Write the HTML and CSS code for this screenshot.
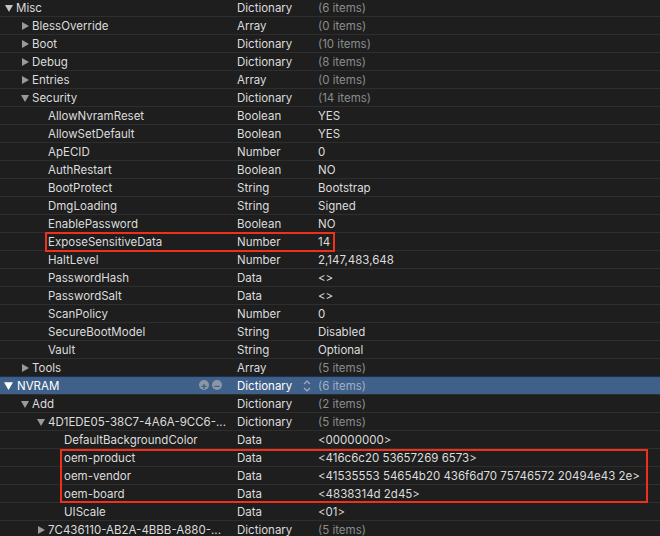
FILE: index.html
```html
<!DOCTYPE html>
<html>
<head>
<meta charset="utf-8">
<link rel="stylesheet" href="styles.css">
</head>
<body>
<svg width="0" height="0" class="defs">
  <defs>
    <symbol id="down" viewBox="0 0 8 8"><path d="M0 1 H8 L4 8 Z"/></symbol>
    <symbol id="right" viewBox="0 0 8 8"><path d="M1 0 V8 L8 4 Z"/></symbol>
  </defs>
</svg>
<div class="list">
  <div class="row top"><div class="key l0"><svg class="tri open"><use href="#down"/></svg>Misc</div><div class="type">Dictionary</div><div class="val dim">(6 items)</div></div>
  <div class="row"><div class="key l1"><svg class="tri"><use href="#right"/></svg>BlessOverride</div><div class="type">Array</div><div class="val dim">(0 items)</div></div>
  <div class="row"><div class="key l1"><svg class="tri"><use href="#right"/></svg>Boot</div><div class="type">Dictionary</div><div class="val dim">(10 items)</div></div>
  <div class="row"><div class="key l1"><svg class="tri"><use href="#right"/></svg>Debug</div><div class="type">Dictionary</div><div class="val dim">(8 items)</div></div>
  <div class="row"><div class="key l1"><svg class="tri"><use href="#right"/></svg>Entries</div><div class="type">Array</div><div class="val dim">(0 items)</div></div>
  <div class="row"><div class="key l1"><svg class="tri"><use href="#down"/></svg>Security</div><div class="type">Dictionary</div><div class="val dim">(14 items)</div></div>
  <div class="row"><div class="key l2">AllowNvramReset</div><div class="type">Boolean</div><div class="val">YES</div></div>
  <div class="row"><div class="key l2">AllowSetDefault</div><div class="type">Boolean</div><div class="val">YES</div></div>
  <div class="row"><div class="key l2">ApECID</div><div class="type">Number</div><div class="val">0</div></div>
  <div class="row"><div class="key l2">AuthRestart</div><div class="type">Boolean</div><div class="val">NO</div></div>
  <div class="row"><div class="key l2">BootProtect</div><div class="type">String</div><div class="val">Bootstrap</div></div>
  <div class="row"><div class="key l2">DmgLoading</div><div class="type">String</div><div class="val">Signed</div></div>
  <div class="row"><div class="key l2">EnablePassword</div><div class="type">Boolean</div><div class="val">NO</div></div>
  <div class="group">
    <div class="row"><div class="key l2">ExposeSensitiveData</div><div class="type">Number</div><div class="val">14</div></div>
    <div class="mark mark-a"></div>
  </div>
  <div class="row"><div class="key l2">HaltLevel</div><div class="type">Number</div><div class="val">2,147,483,648</div></div>
  <div class="row"><div class="key l2">PasswordHash</div><div class="type">Data</div><div class="val">&lt;&gt;</div></div>
  <div class="row"><div class="key l2">PasswordSalt</div><div class="type">Data</div><div class="val">&lt;&gt;</div></div>
  <div class="row"><div class="key l2">ScanPolicy</div><div class="type">Number</div><div class="val">0</div></div>
  <div class="row"><div class="key l2">SecureBootModel</div><div class="type">String</div><div class="val">Disabled</div></div>
  <div class="row"><div class="key l2">Vault</div><div class="type">String</div><div class="val">Optional</div></div>
  <div class="row"><div class="key l1"><svg class="tri"><use href="#right"/></svg>Tools</div><div class="type">Array</div><div class="val dim">(5 items)</div></div>
  <div class="row selected"><div class="key l0"><svg class="tri sel"><use href="#down"/></svg>NVRAM<span class="btns"><span class="circ">+</span><span class="circ">&minus;</span></span></div><div class="type">Dictionary<svg class="updown" viewBox="0 0 8 14"><path d="M1 5 L4 2 L7 5 M1 9 L4 12 L7 9"/></svg></div><div class="val dim">(6 items)</div></div>
  <div class="row"><div class="key l1"><svg class="tri"><use href="#down"/></svg>Add</div><div class="type">Dictionary</div><div class="val dim">(2 items)</div></div>
  <div class="row"><div class="key l2"><svg class="tri"><use href="#down"/></svg>4D1EDE05-38C7-4A6A-9CC6-...</div><div class="type">Dictionary</div><div class="val dim">(5 items)</div></div>
  <div class="row"><div class="key l3">DefaultBackgroundColor</div><div class="type">Data</div><div class="val">&lt;00000000&gt;</div></div>
  <div class="group">
    <div class="row"><div class="key l3">oem-product</div><div class="type">Data</div><div class="val">&lt;416c6c20 53657269 6573&gt;</div></div>
    <div class="row"><div class="key l3">oem-vendor</div><div class="type">Data</div><div class="val">&lt;41535553 54654b20 436f6d70 75746572 20494e43 2e&gt;</div></div>
    <div class="row"><div class="key l3">oem-board</div><div class="type">Data</div><div class="val">&lt;4838314d 2d45&gt;</div></div>
    <div class="mark mark-b"></div>
  </div>
  <div class="row"><div class="key l3">UIScale</div><div class="type">Data</div><div class="val">&lt;01&gt;</div></div>
  <div class="row"><div class="key l2"><svg class="tri"><use href="#right"/></svg>7C436110-AB2A-4BBB-A880-...</div><div class="type">Dictionary</div><div class="val dim">(5 items)</div></div>
</div>
</body>
</html>
```

FILE: styles.css
```css
html, body {
  margin: 0;
  padding: 0;
  background: #1e1e1e;
  overflow: hidden;
}
.defs { position: absolute; }
.list {
  margin-top: -1px;
  font-family: Inter, "Liberation Sans", Arial, sans-serif;
  font-size: 11.5px;
  color: #dcdcdc;
}
.row {
  display: flex;
  height: 15px;
  padding-top: 2px;
  line-height: 15px;
  border-bottom: 1px solid #2e2e2e;
  white-space: nowrap;
}
.row.selected {
  background: #3f6089;
  border-top: 1px solid #2b5ea8;
  height: 15px;
  padding-top: 1px;
  color: #ffffff;
}
.key {
  width: 237px;
  box-sizing: border-box;
  display: flex;
  align-items: center;
  position: relative;
}
.l0 { padding-left: 16px; }
.l1 { padding-left: 32px; }
.l2 { padding-left: 48px; }
.l3 { padding-left: 64px; }
.tri {
  width: 8px;
  height: 8px;
  margin-left: -11px;
  margin-right: 3px;
  margin-top: -2px;
  fill: #9a9a9a;
}
.tri.open { fill: #c4c4c4; }
.tri.sel { fill: #ffffff; margin-left: -12px; margin-right: 4px; width: 9px; height: 9px; }
.type {
  width: 81px;
  display: flex;
  align-items: center;
}
.val { flex: 1; }
.dim { color: #8c8c8c; }
.selected .dim { color: #9fb0c4; }
.btns {
  position: absolute;
  left: 199px;
  top: 1px;
  display: flex;
  gap: 3px;
}
.circ {
  width: 10px;
  height: 10px;
  border-radius: 50%;
  background: #8c97a6;
  color: #3f6089;
  font-size: 10px;
  font-weight: bold;
  line-height: 10px;
  text-align: center;
}
.updown {
  width: 8px;
  height: 14px;
  margin-left: 11px;
  margin-top: -1px;
  fill: none;
  stroke: #9fb0c4;
  stroke-width: 1.2;
}
.group { position: relative; }
.mark {
  position: absolute;
  border: 2px solid #f0301a;
  box-sizing: border-box;
  pointer-events: none;
}
.mark-a { left: 45px; top: -1px; width: 290px; height: 20px; }
.mark-b { left: 60px; top: 0; width: 588px; height: 54px; }
```
